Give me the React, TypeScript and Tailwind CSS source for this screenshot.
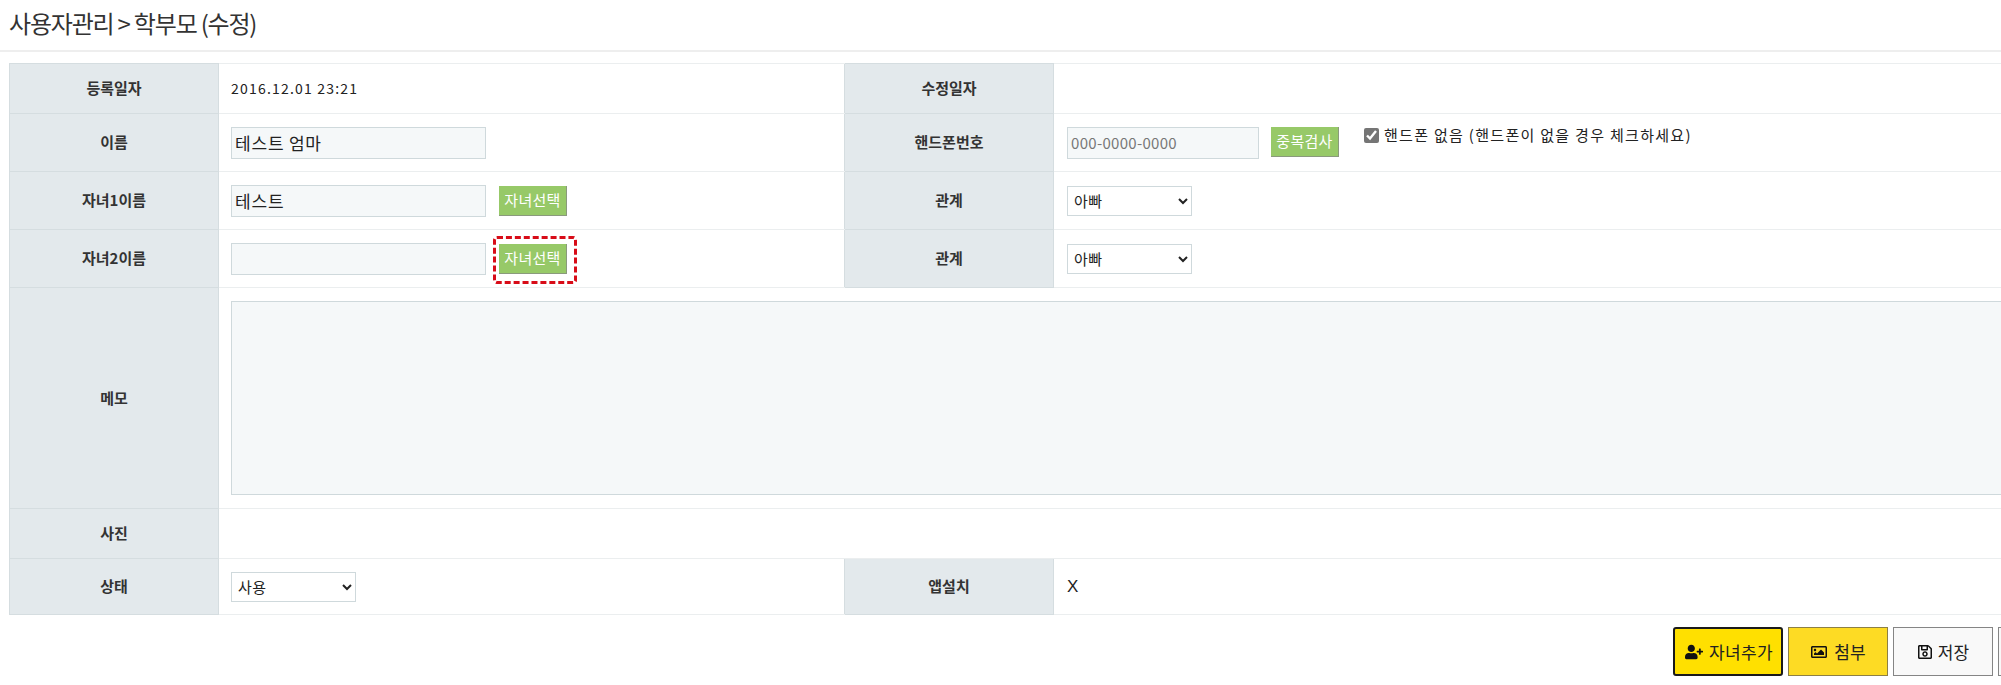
import { FaUserPlus, FaRegImage, FaRegSave } from "react-icons/fa";

const font = "font-['Noto_Sans_CJK_KR','Noto_Sans',sans-serif]";
const th = "border border-[#d5dde0] bg-[#e3e9ec] text-center align-middle text-[15px] font-bold text-[#333333] p-0";
const td = "border-y border-[#ebeeef] bg-white pr-[13px] pl-[13px] py-0 align-middle text-[14px] text-[#222222]";
const tdLeft = "border-y border-[#ebeeef] bg-white pr-[13px] pl-[12px] py-0 align-middle text-[14px] text-[#222222]";
const inputBase = "h-[32px] border border-[#cfd9dc] bg-[#f5f8f9] px-[3px] text-[#222222] outline-none";
const nameInput = `${inputBase} w-[255px] text-[17px] tracking-[0.8px]`;
const selectCls = "h-[30px] w-[125px] border border-[#cfd9dc] bg-white px-[2px] text-[15px] tracking-[0.5px] text-[#222222] outline-none";
const greenBtn = "h-[30px] w-[68px] border-r border-b border-[#8a9a7c] bg-[#97c968] text-center text-[15px] leading-[28px] tracking-[0.3px] text-white";

function Relation() {
  return (
    <select defaultValue="아빠" className={selectCls}>
      <option>아빠</option>
      <option>엄마</option>
    </select>
  );
}

export default function App() {
  return (
    <div className={`${font} h-[685px] w-[2001px] overflow-hidden bg-white`}>
      <h1 className="flex h-[52px] items-center border-b-2 border-[#eeeeee] pb-[4px] pl-[9px] text-[24px] font-normal tracking-[-1.2px] text-[#333333]">
        사용자관리 &gt; 학부모 (수정)
      </h1>
      <div className="pt-[11px] pl-[9px]">
        <table className="w-[2120px] table-fixed border-collapse">
          <colgroup>
            <col className="w-[209px]" />
            <col className="w-[626px]" />
            <col className="w-[209px]" />
            <col />
          </colgroup>
          <tbody>
            <tr className="h-[50px]">
              <th className={th}>등록일자</th>
              <td className={`${tdLeft} tracking-[1.2px]`}>2016.12.01 23:21</td>
              <th className={th}>수정일자</th>
              <td className={td}></td>
            </tr>
            <tr className="h-[58px]">
              <th className={th}>이름</th>
              <td className={tdLeft}>
                <input className={nameInput} defaultValue="테스트 엄마" />
              </td>
              <th className={th}>핸드폰번호</th>
              <td className={td}>
                <div className="flex items-start">
                  <input
                    className={`${inputBase} w-[192px] text-[15px] tracking-[0.3px] placeholder:text-[#777777]`}
                    placeholder="000-0000-0000"
                  />
                  <button className={`${greenBtn} ml-[12px]`}>중복검사</button>
                  <label className="ml-[25px] flex h-[18px] items-center gap-[5px] text-[15px] tracking-[1.3px] text-[#222222]">
                    <input type="checkbox" defaultChecked className="h-[15px] w-[15px] accent-[#757575]" />
                    <span>핸드폰 없음 (핸드폰이 없을 경우 체크하세요)</span>
                  </label>
                </div>
              </td>
            </tr>
            <tr className="h-[58px]">
              <th className={th}>자녀1이름</th>
              <td className={tdLeft}>
                <div className="flex items-center">
                  <input className={nameInput} defaultValue="테스트" />
                  <button className={`${greenBtn} ml-[13px]`}>자녀선택</button>
                </div>
              </td>
              <th className={th}>관계</th>
              <td className={td}>
                <Relation />
              </td>
            </tr>
            <tr className="h-[58px]">
              <th className={th}>자녀2이름</th>
              <td className={tdLeft}>
                <div className="flex items-center">
                  <input className={nameInput} />
                  <div className="relative">
                    <button className={`${greenBtn} ml-[13px]`}>자녀선택</button>
                    <span className="absolute top-[-8px] right-[-10px] bottom-[-10px] left-[7px] rounded-[4px] border-[3px] border-dashed border-[#d80c18]"></span>
                  </div>
                </div>
              </td>
              <th className={th}>관계</th>
              <td className={td}>
                <Relation />
              </td>
            </tr>
            <tr className="h-[221px]">
              <th className={th}>메모</th>
              <td className={tdLeft} colSpan={3}>
                <textarea className="block h-[194px] w-full border border-[#cfd9dc] bg-[#f5f8f9] outline-none"></textarea>
              </td>
            </tr>
            <tr className="h-[50px]">
              <th className={th}>사진</th>
              <td className={tdLeft} colSpan={3}></td>
            </tr>
            <tr className="h-[56px]">
              <th className={th}>상태</th>
              <td className={tdLeft}>
                <select defaultValue="사용" className={selectCls}>
                  <option>사용</option>
                  <option>미사용</option>
                </select>
              </td>
              <th className={th}>앱설치</th>
              <td className={`${td} font-['Liberation_Sans',sans-serif] text-[17px] font-light`}>X</td>
            </tr>
          </tbody>
        </table>
      </div>
      <div className="mt-[12px] flex gap-[5px] pl-[1673px]">
        <button className="flex h-[49px] w-[110px] shrink-0 items-center justify-center gap-[6px] rounded-[3px] border-2 border-[#1a1a1a] bg-[#ffe000] pl-[2px] text-[17px] tracking-[0.3px] text-[#222222]">
          <FaUserPlus className="h-[16px] w-[18px] text-[#111111]" />
          자녀추가
        </button>
        <button className="flex h-[49px] w-[100px] shrink-0 items-center justify-center gap-[6px] border border-[#8c7f45] bg-[#fddb24] text-[17px] text-[#222222]">
          <FaRegImage className="h-[16px] w-[18px] text-[#111111]" />
          첨부
        </button>
        <button className="flex h-[49px] w-[100px] shrink-0 items-center justify-center gap-[5px] border border-[#858585] bg-[#f9f9f9] text-[17px] text-[#222222]">
          <FaRegSave className="h-[16px] w-[16px] text-[#111111]" />
          저장
        </button>
        <button className="h-[49px] w-[100px] shrink-0 border border-[#858585] bg-[#f9f9f9]"></button>
      </div>
    </div>
  );
}
